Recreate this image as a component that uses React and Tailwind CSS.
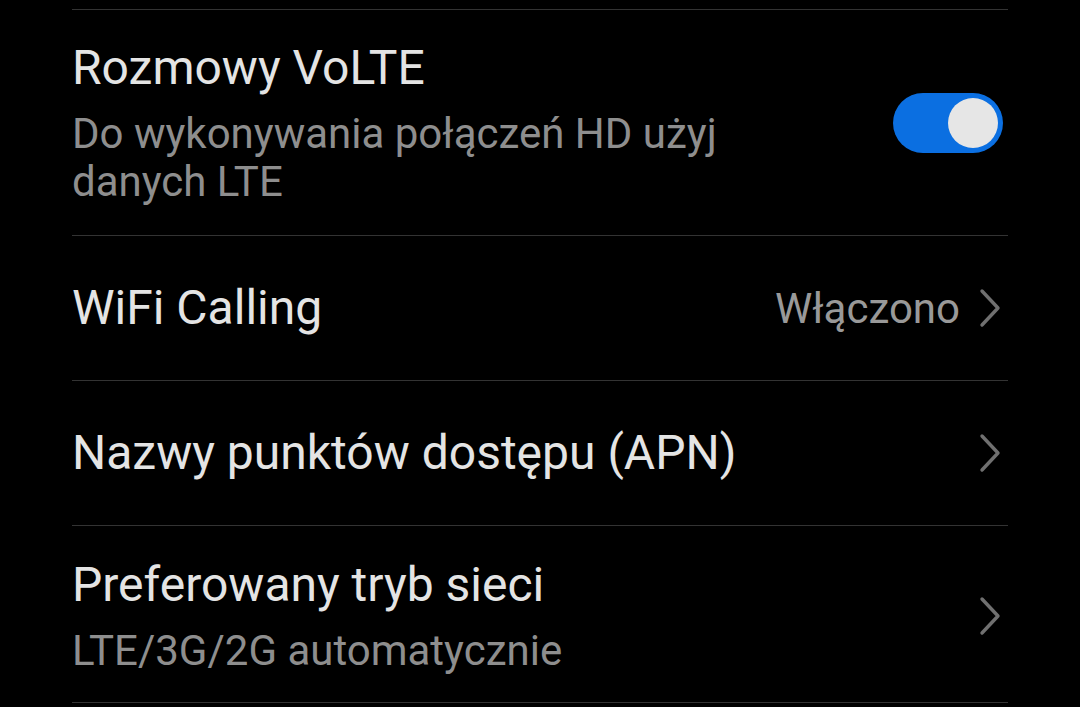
// Mobile network settings list (dark theme)
const font = { fontFamily: 'Roboto, "Noto Sans", sans-serif' }

function Chevron() {
    return (
        <svg width="24" height="40" viewBox="0 0 24 40" className="shrink-0">
            <path d="M4 3 L20 20 L4 37" fill="none" stroke="#707070" strokeWidth="3.4" strokeLinecap="round" strokeLinejoin="round" />
        </svg>
    )
}

function Toggle({ on = true }) {
    return (
        <div className={`w-[110px] h-[60px] mr-[5px] rounded-full flex items-center px-[5px] shrink-0 ${on ? 'bg-[#0b6fe1] justify-end' : 'bg-[#444] justify-start'}`}>
            <div className="w-[50px] h-[50px] rounded-full bg-[#e6e6e6]" />
        </div>
    )
}

function Row({ title, subtitle, right, className }) {
    return (
        <div className={`flex items-center justify-between border-b border-[#333333] ${className}`}>
            <div className="flex flex-col">
                <span className="text-[48px] leading-[56px] text-[#e4e4e4]">{title}</span>
                {subtitle && (
                    <span className="text-[42px] leading-[48px] text-[#8e8e8e] max-w-[680px] mt-[14px]">{subtitle}</span>
                )}
            </div>
            {right}
        </div>
    )
}

export default function App() {
    return (
        <div className="w-[1080px] h-[707px] bg-black overflow-hidden" style={font}>
            <div className="px-[72px]">
                <div className="h-[10px] border-b border-[#333333]" />
                <Row
                    className="h-[226px]"
                    title="Rozmowy VoLTE"
                    subtitle="Do wykonywania połączeń HD użyj danych LTE"
                    right={<Toggle />}
                />
                <Row
                    className="h-[145px]"
                    title="WiFi Calling"
                    right={
                        <div className="flex items-center gap-[18px] pr-[6px]">
                            <span className="text-[42px] text-[#999999]">Włączono</span>
                            <Chevron />
                        </div>
                    }
                />
                <Row
                    className="h-[145px]"
                    title="Nazwy punktów dostępu (APN)"
                    right={<div className="pr-[6px]"><Chevron /></div>}
                />
                <Row
                    className="h-[177px] pt-[4px]"
                    title="Preferowany tryb sieci"
                    subtitle="LTE/3G/2G automatycznie"
                    right={<div className="pr-[6px]"><Chevron /></div>}
                />
            </div>
        </div>
    )
}
